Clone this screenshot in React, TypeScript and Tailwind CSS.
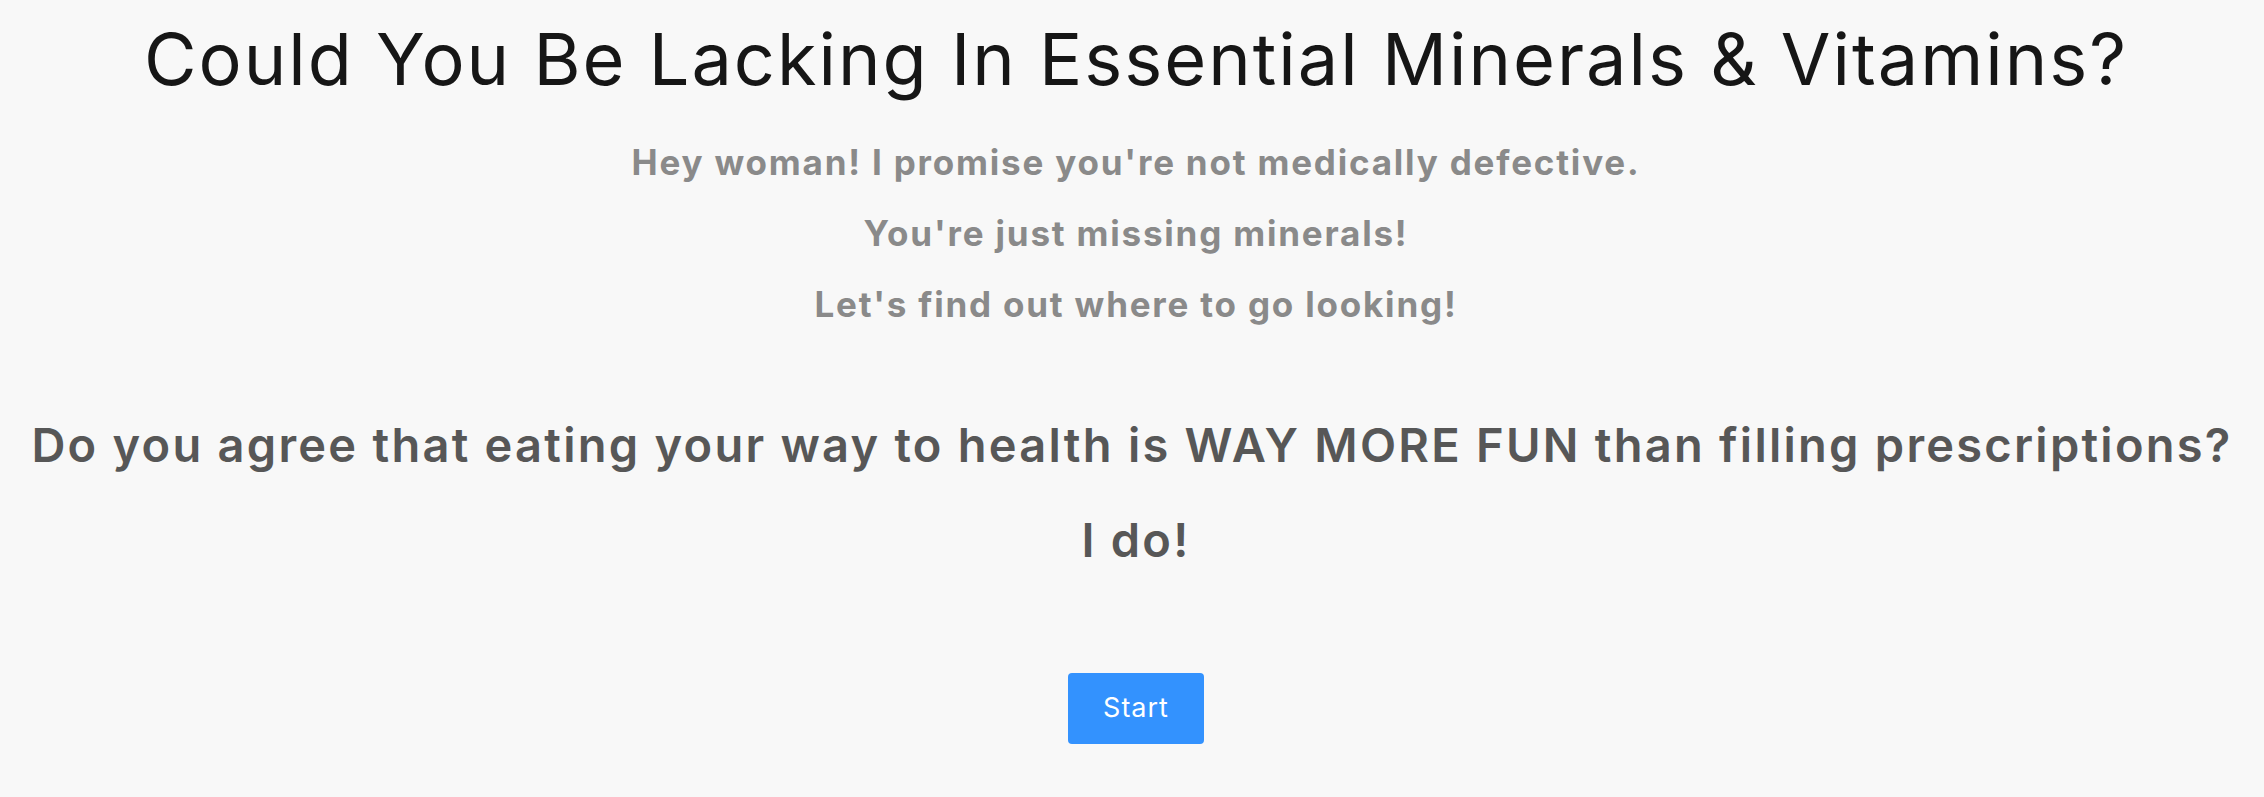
import React from 'react'

const subLines = [
  "Hey woman! I promise you're not medically defective.",
  "You're just missing minerals!",
  "Let's find out where to go looking!",
]

const App = () => {
  return (
    <div className="min-h-screen bg-[#f8f8f8] pl-2 flex flex-col items-center text-center font-['Inter',_'Noto_Sans',_sans-serif]">
      <h1 className="mt-[23px] text-[72px] leading-[72px] font-normal tracking-[2px] text-[#161616] whitespace-nowrap">
        Could You Be Lacking In Essential Minerals &amp; Vitamins?
      </h1>

      <div className="mt-[32px] flex flex-col items-center">
        {subLines.map((line) => (
          <p
            key={line}
            className="text-[35px] leading-[71px] font-bold tracking-[1.8px] text-[#8a8a8a] whitespace-nowrap"
          >
            {line}
          </p>
        ))}
      </div>

      <div className="mt-[57px] -ml-2 flex flex-col items-center text-[47px] leading-[95px] font-semibold tracking-[2.25px] text-[#575757]">
        <p className="whitespace-nowrap">
          Do you agree that eating your way to health is WAY MORE FUN than filling prescriptions?
        </p>
        <p className="ml-2">I do!</p>
      </div>

      <button
        type="button"
        className="mt-[86px] w-[136px] h-[71px] rounded-[4px] bg-[#3392fe] text-white text-[27px] font-normal tracking-[1px] flex items-center justify-center"
      >
        Start
      </button>
    </div>
  )
}

export default App
